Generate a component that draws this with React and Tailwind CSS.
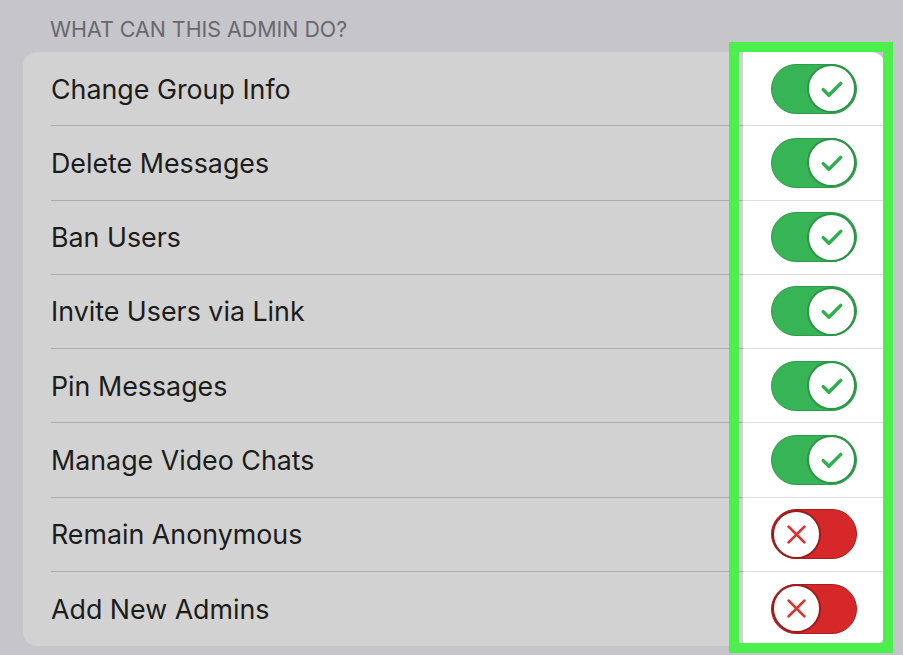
const permissions = [
  { label: 'Change Group Info', on: true },
  { label: 'Delete Messages', on: true },
  { label: 'Ban Users', on: true },
  { label: 'Invite Users via Link', on: true },
  { label: 'Pin Messages', on: true },
  { label: 'Manage Video Chats', on: true },
  { label: 'Remain Anonymous', on: false },
  { label: 'Add New Admins', on: false },
]

function Toggle({ on }) {
  if (on) {
    return (
      <div className="w-[86px] h-[50px] rounded-full bg-[#37b556] border border-[#2f9a4a] flex items-center justify-end">
        <div className="w-[49px] h-[49px] rounded-full bg-white border-2 border-[#2c9446] flex items-center justify-center">
          <svg width="30" height="30" viewBox="0 0 24 24" fill="none" stroke="#2fb04f" strokeWidth="2.8" strokeLinecap="round" strokeLinejoin="round">
            <path d="M5 12.5l4.5 4.5L19 7.5" />
          </svg>
        </div>
      </div>
    )
  }
  return (
    <div className="w-[86px] h-[50px] rounded-full bg-[#d62828] border border-[#a81d1d] flex items-center justify-start">
      <div className="w-[49px] h-[49px] rounded-full bg-white border-2 border-[#9e1b1b] flex items-center justify-center">
        <svg width="27" height="27" viewBox="0 0 24 24" fill="none" stroke="#d83434" strokeWidth="2.5" strokeLinecap="round">
          <path d="M5 5l14 14M19 5L5 19" />
        </svg>
      </div>
    </div>
  )
}

export default function App() {
  return (
    <div className="relative w-[903px] h-[655px] overflow-hidden bg-[#c6c6ca]" style={{ fontFamily: 'Inter, "Liberation Sans", sans-serif' }}>
      <p className="pl-[50px] pt-[15px] h-[52px] text-[21.4px] leading-[28px] text-[#68686c] uppercase">
        What can this admin do?
      </p>

      <div className="ml-[23px] w-[862px] rounded-[14px] bg-[#d2d2d2] overflow-hidden">
        {permissions.map((p, i) => (
          <div key={p.label} className="flex h-[74.25px]">
            <div className="flex-1 flex items-center pl-[28px]">
              <div className={`h-full flex-1 flex items-center ${i < permissions.length - 1 ? 'border-b border-[#ababab]' : ''}`}>
                <span className="text-[26.8px] text-[#1b1b1b]">{p.label}</span>
              </div>
            </div>
            <div className={`w-[142px] flex items-center justify-center bg-white ${i < permissions.length - 1 ? 'border-b border-[#dedede]' : ''}`}>
              <Toggle on={p.on} />
            </div>
          </div>
        ))}
      </div>

      <div className="absolute left-[729px] top-[42px] w-[164px] h-[611px] border-[10px] border-[#4cf04c]" />
    </div>
  )
}
